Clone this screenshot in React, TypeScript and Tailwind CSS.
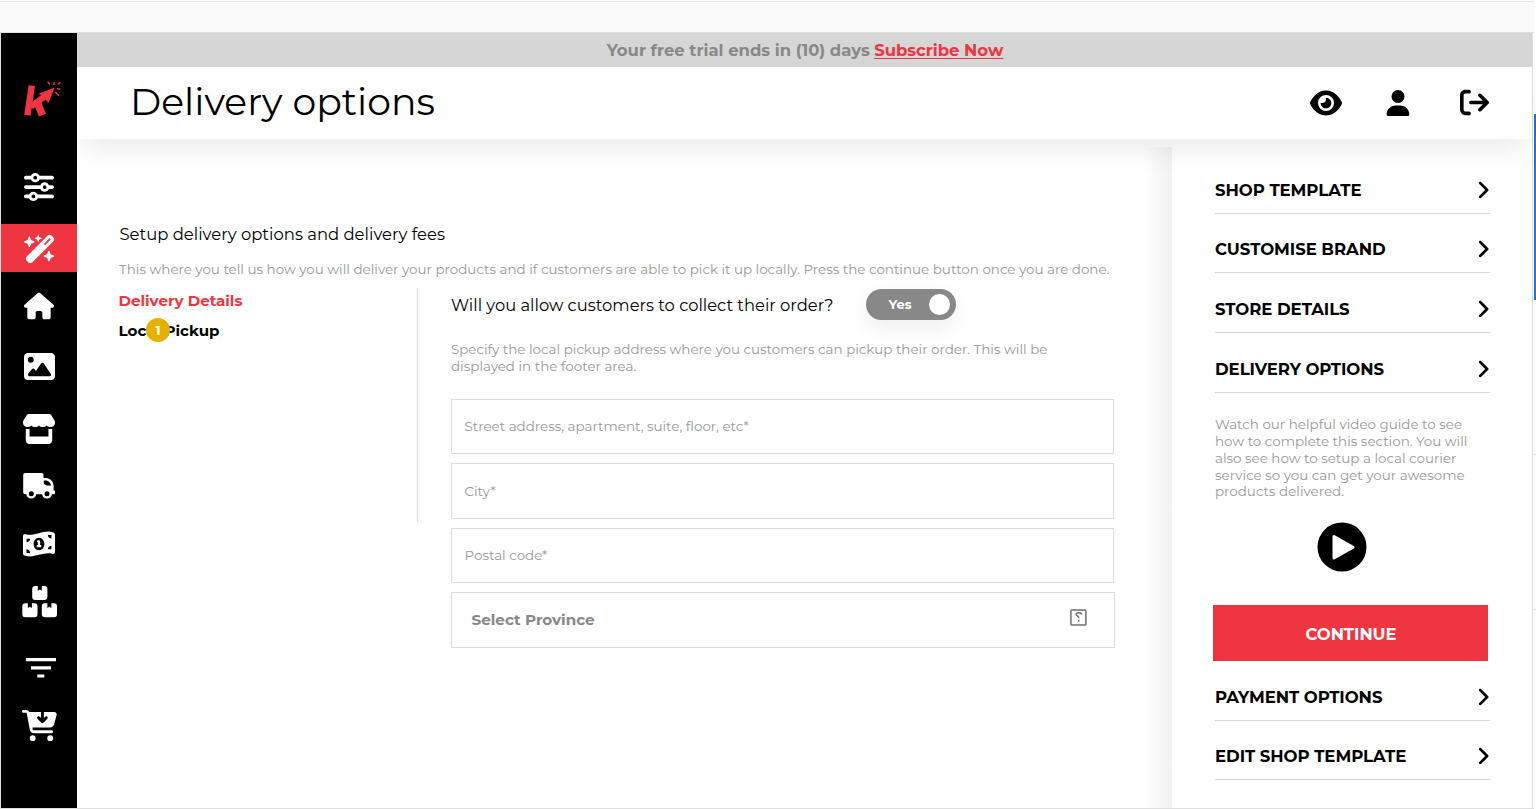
import React from "react";
import {
  FaAngleRight,
  FaArrowRightFromBracket,
  FaCartArrowDown,
  FaEye,
  FaHouse,
  FaImage,
  FaMoneyBill1Wave,
  FaSliders,
  FaStore,
  FaUser,
  FaWandMagicSparkles,
} from "react-icons/fa6";

function Logo() {
  return (
    <svg width="40" height="38" viewBox="22 80 40 38" fill="none">
      <g stroke="#ef3541">
        <path d="M31.800 85.600 27.400 115.200" strokeWidth="6.400" />
        <path d="M31 106.500 46.500 95" strokeWidth="6.200" />
        <path d="M36.800 101 42.400 115.200" strokeWidth="7.600" />
        <path
          d="m47.600 81.700 2.500 2.800M54.200 82l-.400 3M60.400 82.300l-2.600 2.200M56.800 88.700l3.500.300M55.200 92l3.800 3.800"
          strokeWidth="1.400"
        />
      </g>
      <path d="M54.600 87.400 38.600 93.800l3.200 1.500 3.500 4 3.200 3.700Z" fill="#ef3541" />
    </svg>
  );
}

function Truck() {
  return (
    <svg width="32" height="26" viewBox="0 0 32 26">
      <path
        fill="#fff"
        d="M2.200 0h16.300a2 2 0 0 1 2 2v3h2.700c4 0 7.400 3.800 7.400 8v4.600h.400a1 1 0 0 1 1 1v1.600a1 1 0 0 1-1 1h-28.800a2 2 0 0 1-2-2V2a2 2 0 0 1 2-2Z"
      />
      <path fill="#000" d="M20.800 7.400h1.700c3 0 5 2.300 5.500 5.100h-4.400l-2.800-1.800Z" />
      <g fill="#000" stroke="#fff" strokeWidth="2.400">
        <circle cx="8.300" cy="20.700" r="3.700" />
        <circle cx="24" cy="20.700" r="3.700" />
      </g>
    </svg>
  );
}

function Boxes() {
  const box =
    "M3 0h2.600v4.700l2-1.200 2 1.200V0h2.600a3 3 0 0 1 3 3v8a3 3 0 0 1-3 3h-9.200a3 3 0 0 1-3-3V3a3 3 0 0 1 3-3Z";
  return (
    <svg width="36" height="32" viewBox="0 0 36 32" fill="#fff">
      <path d={box} transform="translate(10.200)" />
      <path d={box} transform="translate(.300 17.300)" />
      <path d={box} transform="translate(19.800 17.300)" />
    </svg>
  );
}

function Filter() {
  return (
    <svg width="30" height="20" viewBox="0 0 30 20" fill="#fff" className="ml-[3px]">
      <path d="M0 0h30v3.200H0zM5 8.200h20v3.200H5zM11.300 16.400h7v3.200h-7z" />
    </svg>
  );
}

const cell = "flex items-center justify-center shrink-0 ";

function Sidebar() {
  return (
    <nav className="flex w-[76px] shrink-0 flex-col bg-black text-white">
      <div className="flex h-[118px] shrink-0 justify-center pl-[5px] pt-[47px]">
        <Logo />
      </div>
      <div className={cell + "h-[72.500px]"}><FaSliders size={30} /></div>
      <div className={cell + "h-[48.500px] bg-[#ef3541] pl-px pt-[2px]"}><FaWandMagicSparkles size={32} /></div>
      <div className={cell + "h-[68px]"}><FaHouse size={30} /></div>
      <div className={cell + "h-[53px]"}><FaImage size={31} /></div>
      <div className={cell + "h-[72px]"}><FaStore size={34} /></div>
      <div className={cell + "h-[42px]"}><Truck /></div>
      <div className={cell + "h-[74px]"}><FaMoneyBill1Wave size={32} /></div>
      <div className={cell + "h-[42px] pl-px"}><Boxes /></div>
      <div className={cell + "h-[90px]"}><Filter /></div>
      <div className={cell + "h-[25px]"}><FaCartArrowDown size={35} /></div>
    </nav>
  );
}

function NavRow({ label }: { label: string }) {
  return (
    <div className="flex h-[59.600px] shrink-0 items-end justify-between border-b border-[#d9d9d9] pb-[11px]">
      <span className="text-[16.550px] font-bold leading-6 tracking-[-0.050px]">{label}</span>
      <FaAngleRight size={22} className="-mr-[4.500px] mb-px" />
    </div>
  );
}

function Panel() {
  return (
    <aside className="flex w-[360px] shrink-0 flex-col pl-[43px] pr-[42.500px] pt-[15.300px]">
      <NavRow label="SHOP TEMPLATE" />
      <NavRow label="CUSTOMISE BRAND" />
      <NavRow label="STORE DETAILS" />
      <NavRow label="DELIVERY OPTIONS" />
      <p className="mt-[23.500px] whitespace-nowrap text-[13.450px] leading-[16.800px] text-[#989898]">
        Watch our helpful video guide to see
        <br />
        how to complete this section. You will
        <br />
        also see how to setup a local courier
        <br />
        service so you can get your awesome
        <br />
        products delivered.
      </p>
      <svg width="50" height="50" viewBox="0 0 50 50" className="ml-[102px] mt-[22px] shrink-0">
        <circle cx="25" cy="25" r="24.500" />
        <path d="M17 14.500v21.500l19-10.700Z" fill="#fff" stroke="#fff" strokeWidth="3" strokeLinejoin="round" />
      </svg>
      <button className="-ml-[2px] mt-[32.700px] h-[56px] w-[275px] shrink-0 bg-[#ef3541] pl-px pt-[3px] text-[16.400px] font-bold text-white">
        CONTINUE
      </button>
      <div className="flex flex-col pt-[.300px]">
        <NavRow label="PAYMENT OPTIONS" />
        <NavRow label="EDIT SHOP TEMPLATE" />
      </div>
    </aside>
  );
}

function Field({ label }: { label: string }) {
  return (
    <div className="flex h-[55.600px] w-[663px] items-center border border-[#dcdcdc] pl-[12.500px] text-[13.450px] text-[#989898]">
      {label}
    </div>
  );
}

function Content() {
  return (
    <main className="flex min-w-0 flex-1 flex-col whitespace-nowrap pl-[41.500px] pt-[83.500px]">
      <h2 className="ml-px text-[16.450px] leading-6">Setup delivery options and delivery fees</h2>
      <p className="ml-[.500px] mt-[13px] text-[13.450px] leading-5 text-[#989898]">
        This where you tell us how you will deliver your products and if customers are able to pick it up locally.
        Press the continue button once you are done.
      </p>
      <div className="mt-[9px] flex">
        <div className="flex h-[234px] w-[299px] flex-col border-r-[1.500px] border-[#dedede] text-[15.100px] font-bold">
          <span className="mt-[.500px] h-[30px] leading-6 text-[#ef3541]">Delivery Details</span>
          <span className="relative self-start leading-6">
            Local Pickup
            <span className="absolute left-[27.500px] top-[-0.500px] flex size-6 items-center justify-center rounded-full bg-[#e6b000] text-[13px] font-bold text-white">
              1
            </span>
          </span>
        </div>
        <div className="flex flex-col pl-[33.500px]">
          <div className="flex h-[33px] items-center">
            <span className="w-[415px] text-[16.350px]">Will you allow customers to collect their order?</span>
            <div className="flex h-[31px] w-[90px] items-center justify-between rounded-full bg-[#888] pl-[22.500px] pr-[6px] text-[13px] font-bold text-white shadow-[0_8px_22px_rgba(0,0,0,0.070)]">
              Yes
              <span className="size-[21px] rounded-full bg-white" />
            </div>
          </div>
          <p className="mt-[19.500px] text-[13.450px] leading-[16.800px] text-[#989898]">
            Specify the local pickup address where you customers can pickup their order. This will be
            <br />
            displayed in the footer area.
          </p>
          <div className="mt-[24px] flex flex-col gap-[9px]">
            <Field label="Street address, apartment, suite, floor, etc*" />
            <Field label="City*" />
            <Field label="Postal code*" />
            <div className="flex h-[55.600px] w-[664px] items-center justify-between border border-[#dcdcdc] pl-[19.500px] pr-[27px] text-[15.200px] font-bold text-[#888]">
              Select Province
              <svg width="17" height="17" viewBox="0 0 17 17" fill="none" stroke="#707070" className="-mt-[5px]">
                <rect x=".900" y=".900" width="15" height="15" rx=".800" strokeWidth="1.500" />
                <path d="M11.300 5.500V4.600C10.600 3.300 6.200 3.200 6.200 5.200c0 1.900 2.600 1.300 2.600 4M8.800 10.700v1.700" strokeWidth="1.500" />
              </svg>
            </div>
          </div>
        </div>
      </div>
    </main>
  );
}

export default function App() {
  return (
    <div className="flex h-[809px] w-[1536px] overflow-hidden bg-white font-['Montserrat','Inter',sans-serif] text-black">
      <div className="flex w-[1534px] flex-col">
        <div className="h-px shrink-0" />
        <div className="h-8 shrink-0 border-y border-[#dfdfdf] border-t-[#e4e4e4] bg-[#fafafa]" />
        <div className="flex h-[776px] border-b border-l border-[#dedede]">
          <Sidebar />
          <div className="flex w-[1456px] flex-col border-r border-[#dedede]">
            <div className="flex h-[34.400px] shrink-0 items-center justify-center gap-[4.500px] bg-[#d6d6d6] pl-px text-[16.450px] font-bold text-[#888]">
              <span>Your free trial ends in (10) days</span>
              <a className="text-[#ef3541] underline decoration-1 underline-offset-2">Subscribe Now</a>
            </div>
            <div className="relative z-10 flex h-[71.600px] shrink-0 items-center bg-white pl-[53px] shadow-[0_14px_30px_-6px_rgba(0,0,0,0.090)]">
              <h1 className="flex-1 pb-[2px] text-[37.800px] leading-none">Delivery options</h1>
              <div className="flex items-center pb-[1px] pr-[43.500px]">
                <FaEye size={32} className="mr-[43px]" />
                <FaUser size={26} className="mr-[49px]" />
                <FaArrowRightFromBracket size={29} />
              </div>
            </div>
            <div className="flex flex-1">
              <Content />
              <div className="mt-2 w-[28px] shrink-0 bg-linear-to-l from-[#f1f1f1] to-white" />
              <Panel />
            </div>
          </div>
        </div>
      </div>
      <div className="flex flex-1 flex-col">
        <div className="h-[114px]" />
        <div className="h-[186px] bg-[#1a73e8]" />
        <div className="h-[155px] border-b border-[#dedede]" />
        <div className="h-[155px] border-b border-[#dedede]" />
      </div>
    </div>
  );
}
